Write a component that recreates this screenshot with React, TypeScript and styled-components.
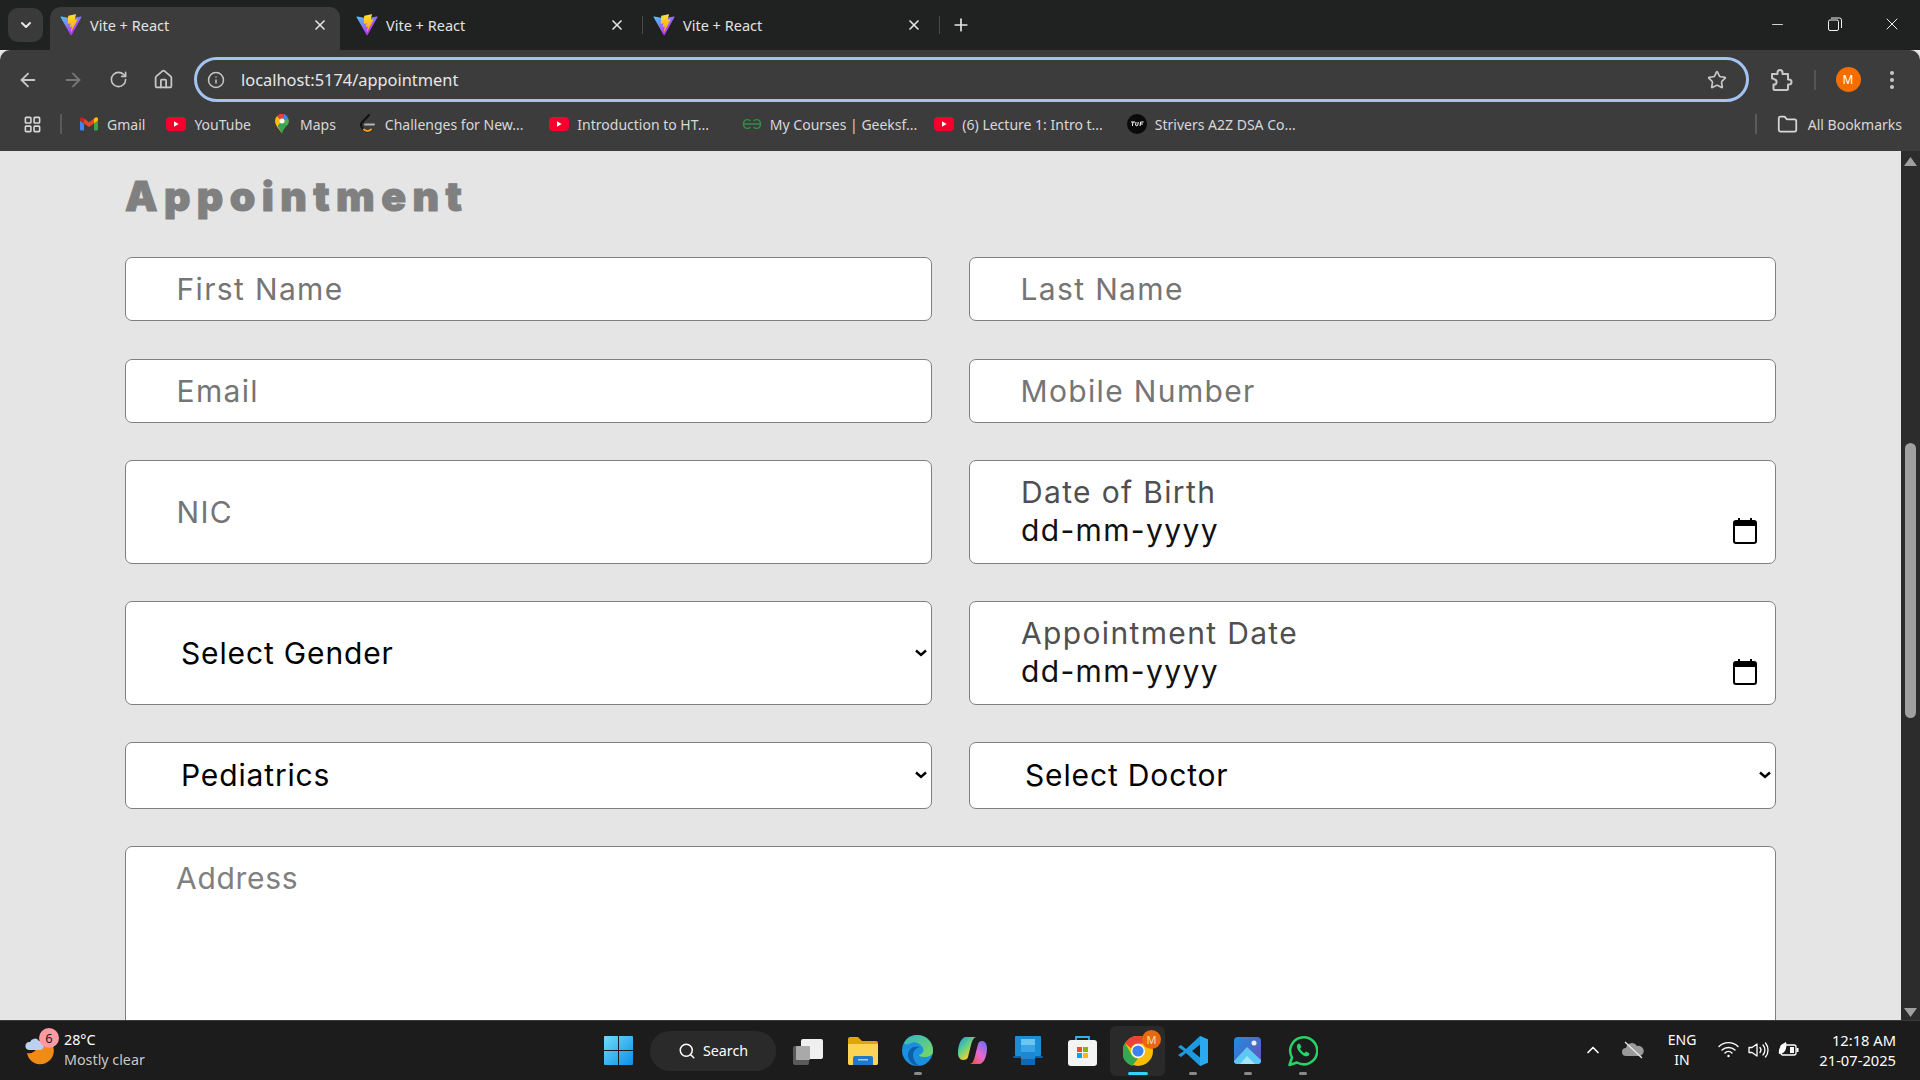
import React from 'react';
import styled, { createGlobalStyle } from 'styled-components';
import {
  ArrowLeft,
  ArrowRight,
  RotateCw,
  Home,
  Info,
  Star,
  X,
  Plus,
  ChevronDown,
  ChevronUp,
  Minus,
  Folder,
  Search,
  LayoutGrid,
} from 'lucide-react';

const GlobalStyle = createGlobalStyle`
  html, body {
    margin: 0;
    padding: 0;
    overflow: hidden;
  }
  * {
    box-sizing: border-box;
  }
`;

const uiFont = `"Noto Sans", "Open Sans", sans-serif`;
const formFont = `Inter, "Open Sans", sans-serif`;

const Screen = styled.div`
  width: 1920px;
  height: 1080px;
  display: flex;
  flex-direction: column;
  overflow: hidden;
  background: #e5e5e5;
  font-family: ${uiFont};
`;

/* ---- browser chrome ---- */

const TabStrip = styled.div`
  height: 50px;
  background: #202221;
  display: flex;
  align-items: flex-end;
  padding-left: 8px;
  flex-shrink: 0;
`;

const TabSwitcher = styled.div`
  width: 35px;
  height: 34px;
  margin: 0 7px 8px 0;
  border-radius: 10px;
  background: #3a3a3a;
  color: #e6e6e6;
  display: flex;
  align-items: center;
  justify-content: center;
`;

const Tab = styled.div<{ $active?: boolean }>`
  width: 296px;
  height: 43px;
  padding: 0 17px 8px 10px;
  border-radius: 10px 10px 0 0;
  display: flex;
  align-items: center;
  background: ${(p) => (p.$active ? '#3c3c3c' : 'transparent')};
  color: #e3e3e3;
  font-size: 14.5px;
  ${(p) => p.$active && 'clip-path: inset(0 6px 0 0 round 10px 10px 0 0);'}
`;

const TabTitle = styled.span`
  margin-left: 8px;
  flex: 1;
  white-space: nowrap;
`;

const TabDivider = styled.span`
  width: 1px;
  height: 18px;
  margin: 0 0 16px 0;
  align-self: flex-end;
  background: #4a4a4a;
`;

const NewTab = styled.span`
  margin: 0 0 15px 11px;
  color: #e6e6e6;
  display: flex;
`;

const WindowControls = styled.div`
  margin-left: auto;
  display: flex;
  align-items: center;
  height: 48px;
  align-self: flex-start;
  color: #f0f0f0;
`;

const WindowButton = styled.span`
  width: 57px;
  display: flex;
  justify-content: center;
`;

const Toolbar = styled.div`
  height: 55px;
  background: #3c3c3c;
  display: flex;
  align-items: center;
  flex-shrink: 0;
  padding: 4px 0 0 17px;
  color: #c7c7c7;
  border-radius: 10px 10px 0 0;
`;

const NavButton = styled.span<{ $dim?: boolean }>`
  width: 22px;
  margin-right: 23px;
  display: flex;
  justify-content: center;
  color: ${(p) => (p.$dim ? '#777' : '#c7c7c7')};
`;

const AddressBar = styled.div`
  flex: 0 0 1555px;
  height: 45px;
  margin-left: -3px;
  border: 3px solid #a3c3f2;
  border-radius: 23px;
  display: flex;
  align-items: center;
  padding: 0 19px 0 10px;
`;

const Url = styled.span`
  margin-left: 16px;
  color: #e8e8e8;
  font-size: 16.4px;
  flex: 1;
`;

const ToolbarRight = styled.div`
  display: flex;
  align-items: center;
  margin-left: 19.5px;
`;

const ToolbarDivider = styled.span`
  width: 2px;
  height: 20px;
  margin: 0 20px 0 21px;
  background: #555;
`;

const Avatar = styled.span`
  width: 25px;
  height: 25px;
  border-radius: 50%;
  background: #f36d00;
  color: #fff;
  font-size: 12px;
  display: flex;
  align-items: center;
  justify-content: center;
  margin-right: 28px;
`;

const BookmarkBar = styled.div`
  height: 46px;
  background: #3c3c3c;
  display: flex;
  align-items: center;
  padding: 0 0 8px 23px;
  color: #d8d8d8;
  font-size: 14px;
  flex-shrink: 0;
`;

const BookmarkDivider = styled.span`
  width: 2px;
  height: 20px;
  background: #5a5a5a;
  margin: 0 17px 0 18px;
`;

const Bookmark = styled.span<{ $long?: boolean }>`
  display: flex;
  align-items: center;
  gap: 8px;
  white-space: nowrap;
  ${(p) => (p.$long ? 'width: 192.5px;' : 'margin-right: 21px;')}
`;

const BookmarkIcon = styled.span`
  width: 20px;
  display: flex;
  justify-content: center;
  flex-shrink: 0;
`;

const AllBookmarks = styled.span`
  margin-left: auto;
  display: flex;
  align-items: center;
  gap: 10px;
  padding-right: 18px;
`;

const AllBookmarksDivider = styled.span`
  width: 2px;
  height: 20px;
  background: #5a5a5a;
  margin-right: 10px;
`;

/* ---- page ---- */

const Viewport = styled.div`
  flex: 1;
  min-height: 0;
  display: flex;
  overflow: hidden;
`;

const Page = styled.main`
  flex: 1;
  padding: 19px 125px 0 125px;
  min-width: 0;
  overflow: hidden;
`;

const Heading = styled.h2`
  margin: 0 0 35px;
  font-family: ${formFont};
  font-size: 41px;
  line-height: 52px;
  font-weight: 900;
  letter-spacing: 6.4px;
  -webkit-text-stroke: 1px #808080;
  color: #808080;
`;

const Form = styled.form`
  display: flex;
  flex-direction: column;
  gap: 37.5px;
`;

const FormRow = styled.div`
  display: grid;
  grid-template-columns: 807px 807px;
  column-gap: 37px;
`;

const fieldBase = `
  width: 100%;
  background: #fff;
  border: 1px solid #808080;
  border-radius: 7px;
  font-family: ${formFont};
  font-size: 30px;
  letter-spacing: 1.35px;
  outline: none;
`;

const TextInput = styled.input<{ $tall?: boolean }>`
  ${fieldBase}
  height: ${(p) => (p.$tall ? '103.5px' : '64px')};
  padding: 0 50.5px;
  color: #111;
  &::placeholder {
    color: #757575;
    opacity: 1;
  }
`;

const DateField = styled.label`
  ${fieldBase}
  height: 103.5px;
  padding: 0 18px 0 51px;
  display: grid;
  grid-template-columns: 1fr auto;
  align-content: center;
  align-items: center;
  row-gap: 1px;
  line-height: 37px;
`;

const DateLabel = styled.span`
  grid-column: 1 / 3;
  color: #4f4f4f;
`;

const DateValue = styled.span`
  color: #111;
`;

const SelectWrap = styled.div`
  position: relative;
  display: flex;
  width: 100%;
`;

const SelectInput = styled.select<{ $tall?: boolean }>`
  ${fieldBase}
  appearance: none;
  letter-spacing: 0.85px;
  height: ${(p) => (p.$tall ? '103.5px' : '66.5px')};
  padding: 0 40px 0 55px;
  color: #000;
`;

const SelectArrow = styled.svg`
  position: absolute;
  top: 50%;
  right: 5px;
  transform: translateY(-50%);
  pointer-events: none;
`;

const AddressInput = styled.textarea`
  ${fieldBase}
  display: block;
  letter-spacing: 0.7px;
  height: 300px;
  padding: 13px 50px;
  line-height: 36px;
  resize: none;
  &::placeholder {
    color: #808080;
    opacity: 1;
  }
`;

const ScrollTrack = styled.div`
  width: 19px;
  background: #2c2c2c;
  display: flex;
  flex-direction: column;
  align-items: center;
  justify-content: space-between;
  flex-shrink: 0;
  position: relative;
  padding: 6px 0 3px;
`;

const ScrollThumb = styled.div`
  position: absolute;
  top: 292px;
  left: 4px;
  width: 11px;
  height: 275px;
  border-radius: 6px;
  background: #a0a0a0;
`;

/* ---- taskbar ---- */

const Taskbar = styled.footer`
  height: 60px;
  flex-shrink: 0;
  background: #1c1c1c;
  border-top: 1px solid #3a3a3a;
  display: flex;
  align-items: center;
  color: #fff;
`;

const Weather = styled.div`
  width: 604px;
  flex-shrink: 0;
  display: flex;
  align-items: center;
  padding-left: 24px;
  gap: 8px;
`;

const WeatherIconWrap = styled.span`
  position: relative;
  width: 32px;
  height: 34px;
  display: block;
`;

const WeatherBadge = styled.span`
  position: absolute;
  top: -6px;
  right: -3px;
  width: 20px;
  height: 20px;
  border-radius: 50%;
  background: #ff9aa2;
  color: #1a1a1a;
  font-size: 13px;
  display: flex;
  align-items: center;
  justify-content: center;
`;

const WeatherText = styled.div`
  font-size: 14.3px;
  line-height: 20px;
  padding-bottom: 2px;
`;

const WeatherSub = styled.div`
  color: #c8c8c8;
`;

const SearchPill = styled.div`
  width: 126px;
  height: 40px;
  margin-left: 17px;
  border-radius: 20px;
  background: #2a2a2a;
  display: flex;
  align-items: center;
  justify-content: center;
  gap: 7px;
  font-size: 14.3px;
`;

const AppRow = styled.div`
  display: flex;
  align-items: center;
  margin-left: 4px;
`;

const AppSlot = styled.span<{ $active?: boolean }>`
  width: 55px;
  height: 50px;
  display: flex;
  align-items: center;
  justify-content: center;
  border-radius: 6px;
  position: relative;
  background: ${(p) => (p.$active ? '#2a2a2a' : 'transparent')};
`;

const AppDot = styled.span<{ $active?: boolean }>`
  position: absolute;
  left: 50%;
  bottom: 1px;
  transform: translateX(-50%);
  width: ${(p) => (p.$active ? '20px' : '8px')};
  height: 3px;
  border-radius: 2px;
  background: ${(p) => (p.$active ? '#2fd6f5' : '#8a8a8a')};
`;

const ChromeBadge = styled.span`
  position: absolute;
  top: 4px;
  right: 4px;
  width: 19px;
  height: 19px;
  border-radius: 50%;
  background: #e8690b;
  color: #ffd9bd;
  font-size: 11px;
  display: flex;
  align-items: center;
  justify-content: center;
`;

const Tray = styled.div`
  margin-left: auto;
  display: flex;
  align-items: center;
  padding: 0 24px 2px 0;
`;

const TrayIcon = styled.span<{ $gap?: number }>`
  display: flex;
  margin-right: ${(p) => p.$gap ?? 10}px;
`;

const Lang = styled.div`
  text-align: center;
  font-size: 14px;
  line-height: 20px;
  margin-right: 22px;
`;

const Clock = styled.div`
  text-align: right;
  font-size: 14.7px;
  line-height: 20px;
  margin-left: 10px;
`;

/* ---- drawn logos ---- */

const ViteLogo = () => (
  <svg width="22" height="22" viewBox="0 0 410 404" style={{ flexShrink: 0 }}>
    <defs>
      <linearGradient id="va" x1="6" y1="33" x2="235" y2="344" gradientUnits="userSpaceOnUse">
        <stop stopColor="#41D1FF" />
        <stop offset="1" stopColor="#BD34FE" />
      </linearGradient>
      <linearGradient id="vb" x1="194" y1="8" x2="236" y2="292" gradientUnits="userSpaceOnUse">
        <stop stopColor="#FFEA83" />
        <stop offset=".08" stopColor="#FFDD35" />
        <stop offset="1" stopColor="#FFA800" />
      </linearGradient>
    </defs>
    <path fill="url(#va)" d="M399.6 59.5 215.9 388.2c-3.8 6.8-13.5 6.8-17.4.1L11.2 59.5C7 52.1 13.3 43.2 21.7 44.7l183.9 32.9c1.2.2 2.4.2 3.5 0l180-32.8c8.3-1.5 14.7 7.3 10.5 14.7Z" />
    <path fill="url(#vb)" d="M292.965 1.574 156.801 28.255a5 5 0 0 0-4.03 4.611l-8.376 141.464c-.197 3.332 2.863 5.918 6.115 5.168l37.91-8.749c3.547-.818 6.752 2.306 6.023 5.873l-11.263 55.153c-.758 3.712 2.727 6.886 6.352 5.785l23.415-7.114c3.63-1.102 7.118 2.081 6.35 5.796l-17.899 86.633c-1.12 5.419 6.088 8.374 9.094 3.728l2.008-3.103 110.954-221.428c1.858-3.707-1.346-7.935-5.418-7.15l-39.022 7.532c-3.667.707-6.787-2.708-5.752-6.296l25.469-88.291c1.036-3.594-2.095-7.012-5.766-6.293Z" />
  </svg>
);

const ExtensionIcon = () => (
  <svg width="24" height="24" viewBox="0 0 24 24" fill="none" stroke="#c7c7c7" strokeWidth="2" strokeLinejoin="round">
    <path d="M3 6h5.500V4.500a2.500 2.500 0 0 1 5 0V6H19v5.500h1a2.500 2.500 0 0 1 0 5h-1V21a1 1 0 0 1-1 1H5.500a1 1 0 0 1-1-1v-4.500a2.500 2.500 0 0 0 1-5 2.500 2.500 0 0 0-2.500-1Z" />
  </svg>
);

const MenuDots = () => (
  <svg width="6" height="20" viewBox="0 0 6 20" fill="#c7c7c7">
    <circle cx="3" cy="3" r="2" />
    <circle cx="3" cy="10" r="2" />
    <circle cx="3" cy="17" r="2" />
  </svg>
);

const YoutubeIcon = () => (
  <svg width="20" height="14" viewBox="0 0 20 14">
    <rect width="20" height="14" rx="4" fill="#f5002c" />
    <path d="M8 4.200 12.600 7 8 9.800Z" fill="#fff" />
  </svg>
);

const GmailIcon = () => (
  <svg width="18" height="14" viewBox="0 0 18 14" fill="none">
    <path d="M0 3.500V12a1.500 1.500 0 0 0 1.500 1.500H4V6.500Z" fill="#4285f4" />
    <path d="M14 6.500v7h2.500A1.500 1.500 0 0 0 18 12V3.500Z" fill="#34a853" />
    <path d="M4 6.500 9 10l5-3.500V1.500L9 5.200 4 1.500Z" fill="#ea4335" />
    <path d="M0 3.500 4 6.500v-5L2.500.5A1.600 1.600 0 0 0 0 1.800Z" fill="#c5221f" />
    <path d="M14 1.500v5l4-3V1.800A1.600 1.600 0 0 0 15.500.5Z" fill="#fbbc04" />
  </svg>
);

const MapsIcon = () => (
  <svg width="14" height="20" viewBox="0 0 14 20">
    <path d="M7 20C5.500 16 0 12 0 7a7 7 0 0 1 2-5l5 5-4 5c1.500 2.500 3.500 5 4 8Z" fill="#fbbc04" />
    <path d="M7 20c.5-3 2-5 4-7.500L7 7 3 12c1.500 2.500 3.500 5 4 8Z" fill="#34a853" />
    <path d="M2 2a7 7 0 0 1 7-2L7 7Z" fill="#ea4335" />
    <path d="M9 0a7 7 0 0 1 4 4l-6 3Z" fill="#4285f4" />
    <path d="M13 4c1.500 3 1 6-2 8.500L7 7Z" fill="#4caf50" />
    <circle cx="7" cy="7" r="2.500" fill="#fff" />
  </svg>
);

const LeetIcon = () => (
  <svg width="16" height="21" viewBox="0 0 16 21" fill="none">
    <path d="M10 1 3 8.500a3.500 3.500 0 0 0 0 5l2 2.500c2 2 5 2 7 0" stroke="#111" strokeWidth="2" strokeLinecap="round" />
    <path d="M5 15.500c2 2 5 2 7 0" stroke="#f89f1b" strokeWidth="2" strokeLinecap="round" />
    <path d="M6 10.500h9" stroke="#b3b3b3" strokeWidth="2" strokeLinecap="round" />
  </svg>
);

const GeeksIcon = () => (
  <svg width="20" height="12" viewBox="0 0 20 12" fill="none" stroke="#2f8d46" strokeWidth="1.300">
    <path d="M10 6H1.500a4 4 0 0 1 7-3M10 6h8.500a4 4 0 0 0-7-3" />
    <path d="M1.500 6a4 4 0 0 0 7 3M18.500 6a4 4 0 0 1-7 3" />
  </svg>
);

const TufIcon = () => (
  <svg width="20" height="20" viewBox="0 0 20 20">
    <circle cx="10" cy="10" r="10" fill="#0a0a0a" />
    <path d="M4 8h4M6 8l-.6 4M9 8l-.4 3c0 1 2 1 2.200 0l.4-3M13 12l.6-4h3M13.300 10h2.500" stroke="#fff" strokeWidth="1" fill="none" />
  </svg>
);

const WeatherIcon = () => (
  <svg width="32" height="34" viewBox="0 0 32 34">
    <path d="M14 9a13 13 0 0 0 14-1 13.500 13.500 0 1 1-25 9c3 1 9 0 11-8Z" fill="#f08c16" transform="translate(0 2)" />
    <path d="M5 16a4 4 0 0 1 1-8 5 5 0 0 1 9-1 4.500 4.500 0 0 1 1 9Z" fill="#bcd0f0" />
  </svg>
);

const WindowsLogo = () => (
  <svg width="29" height="29" viewBox="0 0 29 29">
    <defs>
      <linearGradient id="wl" x1="0" y1="0" x2="1" y2="1">
        <stop stopColor="#6fdcf7" />
        <stop offset="1" stopColor="#0b8fe8" />
      </linearGradient>
    </defs>
    <path fill="url(#wl)" d="M0 1a1 1 0 0 1 1-1h13v14H0ZM15 0h13a1 1 0 0 1 1 1v13H15ZM0 15h14v14H1a1 1 0 0 1-1-1ZM15 15h14v13a1 1 0 0 1-1 1H15Z" />
  </svg>
);

const TaskViewIcon = () => (
  <svg width="30" height="30" viewBox="0 0 30 30">
    <rect x="8" y="3" width="22" height="20" rx="2" fill="#efefef" />
    <rect x="0" y="10" width="16" height="19" rx="2" fill="#5a5a5a" />
    <rect x="3" y="10" width="14" height="14" rx="1" fill="#a9a9a9" />
  </svg>
);

const FolderIcon = () => (
  <svg width="30" height="28" viewBox="0 0 30 28">
    <path d="M0 2a2 2 0 0 1 2-2h8l4 4h14a2 2 0 0 1 2 2v20a2 2 0 0 1-2 2H2a2 2 0 0 1-2-2Z" fill="#e0a40c" />
    <path d="M0 7h30v19a2 2 0 0 1-2 2H2a2 2 0 0 1-2-2Z" fill="#fcd455" />
    <path d="M5 21a2 2 0 0 1 2-2h16a2 2 0 0 1 2 2v7H5Z" fill="#1f78c9" />
    <rect x="10" y="22" width="10" height="1.500" fill="#9fd0f5" />
  </svg>
);

const EdgeIcon = () => (
  <svg width="31" height="31" viewBox="0 0 31 31">
    <defs>
      <linearGradient id="eg" x1="0" y1="0" x2="1" y2="1">
        <stop stopColor="#2fb6c9" />
        <stop offset="1" stopColor="#7ed957" />
      </linearGradient>
    </defs>
    <circle cx="15.500" cy="15.500" r="15.500" fill="#1b8fe0" />
    <path d="M2 8C6 0 14-1 20 .8 27 3 31 9 31 16c0 4-4 6-9 6-3 0-5-1-5-2 4-1 5-4 4-7-2-4-8-7-12-5-3 1-5 3-7 0Z" fill="url(#eg)" />
    <path d="M11 20c0-4 3-7 7-8-5-2-12 1-12 8 0 6 5 11 12 11-4-2-7-6-7-11Z" fill="#0e5fa8" />
  </svg>
);

const CopilotIcon = () => (
  <svg width="29" height="29" viewBox="0 0 29 29">
    <defs>
      <linearGradient id="cpa" x1="0" y1="0" x2="0.8" y2="1">
        <stop stopColor="#1f8fe8" />
        <stop offset=".45" stopColor="#5fd08a" />
        <stop offset=".8" stopColor="#f2d030" />
        <stop offset="1" stopColor="#f08a3c" />
      </linearGradient>
      <linearGradient id="cpb" x1="0.8" y1="0" x2="0.1" y2="1">
        <stop stopColor="#7a6cf0" />
        <stop offset=".5" stopColor="#e46ad0" />
        <stop offset="1" stopColor="#f2504a" />
      </linearGradient>
    </defs>
    <path d="M21 28h-9c3-1 4-4 5-8l3-12c.5-2 2-3 4-3 3 0 5 3 5 7 0 8-3 16-8 16Z" fill="url(#cpb)" />
    <path d="M8 1h10c-3 1-4 4-5 8l-3 12c-.5 2-2 3-5 3-3 0-5-3-5-7C0 9 3 1 8 1Z" fill="url(#cpa)" />
  </svg>
);

const LaptopAppIcon = () => (
  <svg width="30" height="29" viewBox="0 0 30 29">
    <rect x="2" y="0" width="26" height="20" rx="1" fill="#1a8fd8" />
    <rect x="0" y="20" width="30" height="2" rx="1" fill="#0d5fa8" />
    <rect x="8" y="3" width="14" height="6" fill="#6bc6f2" />
    <rect x="8" y="9" width="14" height="7" fill="#3aa6e8" />
    <rect x="8" y="16" width="14" height="7" fill="#1f86d2" />
    <rect x="8" y="23" width="14" height="6" fill="#1068b5" />
  </svg>
);

const StoreIcon = () => (
  <svg width="29" height="31" viewBox="0 0 29 31" fill="none">
    <path d="M8 6V2h13v4" stroke="#2cb5ee" strokeWidth="1.800" />
    <rect y="5" width="29" height="26" rx="3" fill="#f4f4f4" />
    <rect x="9" y="12" width="5" height="5" fill="#f25022" />
    <rect x="15" y="12" width="5" height="5" fill="#7fba00" />
    <rect x="9" y="18" width="5" height="5" fill="#00a4ef" />
    <rect x="15" y="18" width="5" height="5" fill="#ffb900" />
  </svg>
);

const ChromeLogo = () => (
  <svg width="30" height="30" viewBox="0 0 30 30">
    <circle cx="15" cy="15" r="15" fill="#fbbc04" />
    <path d="M15 0a15 15 0 0 1 13 7.500H15a7.500 7.500 0 0 0-7 4.700L2 7A15 15 0 0 1 15 0Z" fill="#ea4335" />
    <path d="M2 7l6.500 11.500A7.500 7.500 0 0 0 15 22.500L9 30A15 15 0 0 1 2 7Z" fill="#34a853" />
    <circle cx="15" cy="15" r="7" fill="#fff" />
    <circle cx="15" cy="15" r="5.600" fill="#3b82f0" />
  </svg>
);

const VsCodeIcon = () => (
  <svg width="30" height="30" viewBox="0 0 30 30">
    <path d="M22 0 30 3.500v23L22 30 8 17l-5 4-3-2 6-4-6-4 3-2 5 4Zm0 8.500L14 15l8 6.500Z" fill="#1d9be0" />
    <path d="M22 0 30 3.500v23L22 30Z" fill="#2aa9f0" />
  </svg>
);

const PhotosIcon = () => (
  <svg width="27" height="27" viewBox="0 0 27 27">
    <defs>
      <linearGradient id="ph" x1="0" y1="0" x2="1" y2="1">
        <stop stopColor="#1f8ee0" />
        <stop offset="1" stopColor="#6b4fb8" />
      </linearGradient>
    </defs>
    <rect width="27" height="27" rx="4" fill="url(#ph)" />
    <circle cx="20" cy="6" r="2.500" fill="#eef" />
    <path d="M0 24 13 10l14 13v1a3 3 0 0 1-3 3H3a3 3 0 0 1-3-3Z" fill="#5cc8f5" />
    <path d="M6 27l7-8 8 8Z" fill="#a5e4fb" />
  </svg>
);

const WhatsappIcon = () => (
  <svg width="30" height="32" viewBox="0 0 30 32" fill="none">
    <path d="M1.500 30 4 22.500A13.500 13.500 0 1 1 9 27.500Z" stroke="#25d366" strokeWidth="2.500" strokeLinejoin="round" />
    <path d="M10 9c-2 2-1 5 2 8.500s6 4.500 8 3.500c1.500-.8 1.500-2.500 1-3l-3-1.500-1.500 1.500c-1.500-.3-4-3-4.500-4.500L13.500 12 12 9c-.5-.5-1.200-.5-2 0Z" fill="#25d366" />
  </svg>
);

const CloudOffIcon = () => (
  <svg width="22" height="18" viewBox="0 0 22 18" fill="none">
    <path d="M4 15a4 4 0 0 1 0-8 6 6 0 0 1 11-2 5 5 0 0 1 3 10Z" fill="#9a9a9a" />
    <path d="M3 1l17 16" stroke="#e8e8e8" strokeWidth="1.300" />
  </svg>
);

const WifiIcon = () => (
  <svg width="21" height="17" viewBox="0 0 21 17" fill="none" stroke="#fff" strokeWidth="1.400" strokeLinecap="round">
    <path d="M1 5.500a13.500 13.500 0 0 1 19 0M4 9a9.500 9.500 0 0 1 13 0M7 12a5 5 0 0 1 7 0" />
    <circle cx="10.500" cy="15" r="1.200" fill="#fff" stroke="none" />
  </svg>
);

const SpeakerIcon = () => (
  <svg width="21" height="18" viewBox="0 0 21 18" fill="none" stroke="#fff" strokeWidth="1.300" strokeLinecap="round">
    <path d="M1 6.500h3L9 3v12l-5-3.500H1Z" strokeLinejoin="round" />
    <path d="M12 6.500a4 4 0 0 1 0 5M15 4a7.500 7.500 0 0 1 0 10M17.500 2a11 11 0 0 1 0 14" />
  </svg>
);

const BatteryLeafIcon = () => (
  <svg width="21" height="17" viewBox="0 0 21 17" fill="none">
    <rect x="3" y="4" width="15" height="10" rx="2" stroke="#fff" strokeWidth="1.300" />
    <rect x="18.500" y="7" width="2" height="4" fill="#fff" />
    <path d="M1 13C0 8 3 3 8 1c1 4 0 9-3 11Z" fill="#fff" />
    <rect x="12" y="6" width="4" height="6" fill="#fff" />
  </svg>
);

const RestoreIcon = () => (
  <svg width="14" height="14" viewBox="0 0 14 14" fill="none" stroke="#f0f0f0" strokeWidth="1">
    <rect x=".5" y="3" width="10" height="10.500" rx="1.500" />
    <path d="M3 1h8.500A2 2 0 0 1 13.500 3v8" />
  </svg>
);

const CalendarIcon = () => (
  <svg width="24" height="26" viewBox="0 0 24 26">
    <path d="M5 0h2v2h10V0h2v2h2a3 3 0 0 1 3 3v18a3 3 0 0 1-3 3H3a3 3 0 0 1-3-3V5a3 3 0 0 1 3-3h2Zm-3 8v15a1 1 0 0 0 1 1h18a1 1 0 0 0 1-1V8Z" fill="#000" />
  </svg>
);

const Dropdown = ({
  tall,
  value,
  label,
}: {
  tall?: boolean;
  value: string;
  label: string;
}) => (
  <SelectWrap>
    <SelectInput $tall={tall} defaultValue={value}>
      <option value={value}>{label}</option>
    </SelectInput>
    <SelectArrow width="12" height="8" viewBox="0 0 12 8" fill="none">
      <path d="M1 1.500 6 6l5-4.500" stroke="#000" strokeWidth="2.400" />
    </SelectArrow>
  </SelectWrap>
);

const bookmarks: { label: string; icon: React.ReactNode; long?: boolean }[] = [
  { label: 'Gmail', icon: <GmailIcon /> },
  { label: 'YouTube', icon: <YoutubeIcon /> },
  { label: 'Maps', icon: <MapsIcon /> },
  { label: 'Challenges for New...', icon: <LeetIcon />, long: true },
  { label: 'Introduction to HT...', icon: <YoutubeIcon />, long: true },
  { label: 'My Courses | Geeksf...', icon: <GeeksIcon />, long: true },
  { label: '(6) Lecture 1: Intro t...', icon: <YoutubeIcon />, long: true },
  { label: 'Strivers A2Z DSA Co...', icon: <TufIcon />, long: true },
];

const apps: { id: string; icon: React.ReactNode; dot?: boolean }[] = [
  { id: 'taskview', icon: <TaskViewIcon /> },
  { id: 'files', icon: <FolderIcon /> },
  { id: 'edge', icon: <EdgeIcon />, dot: true },
  { id: 'copilot', icon: <CopilotIcon /> },
  { id: 'laptop', icon: <LaptopAppIcon /> },
  { id: 'store', icon: <StoreIcon /> },
];

const App = () => {
  return (
    <Screen>
      <GlobalStyle />
      <TabStrip>
        <TabSwitcher>
          <ChevronDown size={16} strokeWidth={3} />
        </TabSwitcher>
        <Tab $active>
          <ViteLogo />
          <TabTitle>Vite + React</TabTitle>
          <X size={16} strokeWidth={2.5} style={{ marginRight: 1 }} />
        </Tab>
        <Tab>
          <ViteLogo />
          <TabTitle>Vite + React</TabTitle>
          <X size={16} strokeWidth={2.5} />
        </Tab>
        <TabDivider />
        <Tab>
          <ViteLogo />
          <TabTitle>Vite + React</TabTitle>
          <X size={16} strokeWidth={2.5} />
        </Tab>
        <TabDivider />
        <NewTab>
          <Plus size={20} strokeWidth={2} />
        </NewTab>
        <WindowControls>
          <WindowButton>
            <Minus size={17} strokeWidth={1.2} />
          </WindowButton>
          <WindowButton>
            <RestoreIcon />
          </WindowButton>
          <WindowButton>
            <X size={20} strokeWidth={1.2} />
          </WindowButton>
        </WindowControls>
      </TabStrip>

      <Toolbar>
        <NavButton>
          <ArrowLeft size={22} />
        </NavButton>
        <NavButton $dim>
          <ArrowRight size={22} />
        </NavButton>
        <NavButton>
          <RotateCw size={19} />
        </NavButton>
        <NavButton>
          <Home size={21} />
        </NavButton>
        <AddressBar>
          <Info size={18} />
          <Url>localhost:5174/appointment</Url>
          <Star size={20} />
        </AddressBar>
        <ToolbarRight>
          <ExtensionIcon />
          <ToolbarDivider />
          <Avatar>M</Avatar>
          <MenuDots />
        </ToolbarRight>
      </Toolbar>

      <BookmarkBar>
        <LayoutGrid size={19} />
        <BookmarkDivider />
        {bookmarks.map((b) => (
          <Bookmark key={b.label} $long={b.long}>
            <BookmarkIcon>{b.icon}</BookmarkIcon>
            {b.label}
          </Bookmark>
        ))}
        <AllBookmarks>
          <AllBookmarksDivider />
          <Folder size={21} />
          All Bookmarks
        </AllBookmarks>
      </BookmarkBar>

      <Viewport>
        <Page>
          <Heading>Appointment</Heading>
          <Form>
            <FormRow>
              <TextInput placeholder="First Name" />
              <TextInput placeholder="Last Name" />
            </FormRow>
            <FormRow>
              <TextInput placeholder="Email" />
              <TextInput placeholder="Mobile Number" />
            </FormRow>
            <FormRow>
              <TextInput $tall placeholder="NIC" />
              <DateField>
                <DateLabel>Date of Birth</DateLabel>
                <DateValue>dd-mm-yyyy</DateValue>
                <CalendarIcon />
              </DateField>
            </FormRow>
            <FormRow>
              <Dropdown tall value="" label="Select Gender" />
              <DateField>
                <DateLabel>Appointment Date</DateLabel>
                <DateValue>dd-mm-yyyy</DateValue>
                <CalendarIcon />
              </DateField>
            </FormRow>
            <FormRow>
              <Dropdown value="Pediatrics" label="Pediatrics" />
              <Dropdown value="" label="Select Doctor" />
            </FormRow>
            <AddressInput placeholder="Address" />
          </Form>
        </Page>
        <ScrollTrack>
          <svg width="13" height="9" viewBox="0 0 13 9">
            <path d="M6.500 0 13 9H0Z" fill="#a0a0a0" />
          </svg>
          <ScrollThumb />
          <svg width="13" height="9" viewBox="0 0 13 9">
            <path d="M6.500 9 13 0H0Z" fill="#a0a0a0" />
          </svg>
        </ScrollTrack>
      </Viewport>

      <Taskbar>
        <Weather>
          <WeatherIconWrap>
            <WeatherIcon />
            <WeatherBadge>6</WeatherBadge>
          </WeatherIconWrap>
          <WeatherText>
            28°C
            <WeatherSub>Mostly clear</WeatherSub>
          </WeatherText>
        </Weather>
        <WindowsLogo />
        <SearchPill>
          <Search size={18} />
          Search
        </SearchPill>
        <AppRow>
          {apps.map((a) => (
            <AppSlot key={a.id}>
              {a.icon}
              {a.dot && <AppDot />}
            </AppSlot>
          ))}
          <AppSlot $active>
            <ChromeLogo />
            <ChromeBadge>M</ChromeBadge>
            <AppDot $active />
          </AppSlot>
          <AppSlot>
            <VsCodeIcon />
            <AppDot />
          </AppSlot>
          <AppSlot>
            <PhotosIcon />
            <AppDot />
          </AppSlot>
          <AppSlot>
            <WhatsappIcon />
            <AppDot />
          </AppSlot>
        </AppRow>
        <Tray>
          <TrayIcon $gap={19}>
            <ChevronUp size={20} strokeWidth={2} />
          </TrayIcon>
          <TrayIcon $gap={24}>
            <CloudOffIcon />
          </TrayIcon>
          <Lang>
            ENG
            <br />
            IN
          </Lang>
          <TrayIcon $gap={9}>
            <WifiIcon />
          </TrayIcon>
          <TrayIcon $gap={9}>
            <SpeakerIcon />
          </TrayIcon>
          <TrayIcon $gap={10}>
            <BatteryLeafIcon />
          </TrayIcon>
          <Clock>
            12:18 AM
            <br />
            21-07-2025
          </Clock>
        </Tray>
      </Taskbar>
    </Screen>
  );
};

export default App;
